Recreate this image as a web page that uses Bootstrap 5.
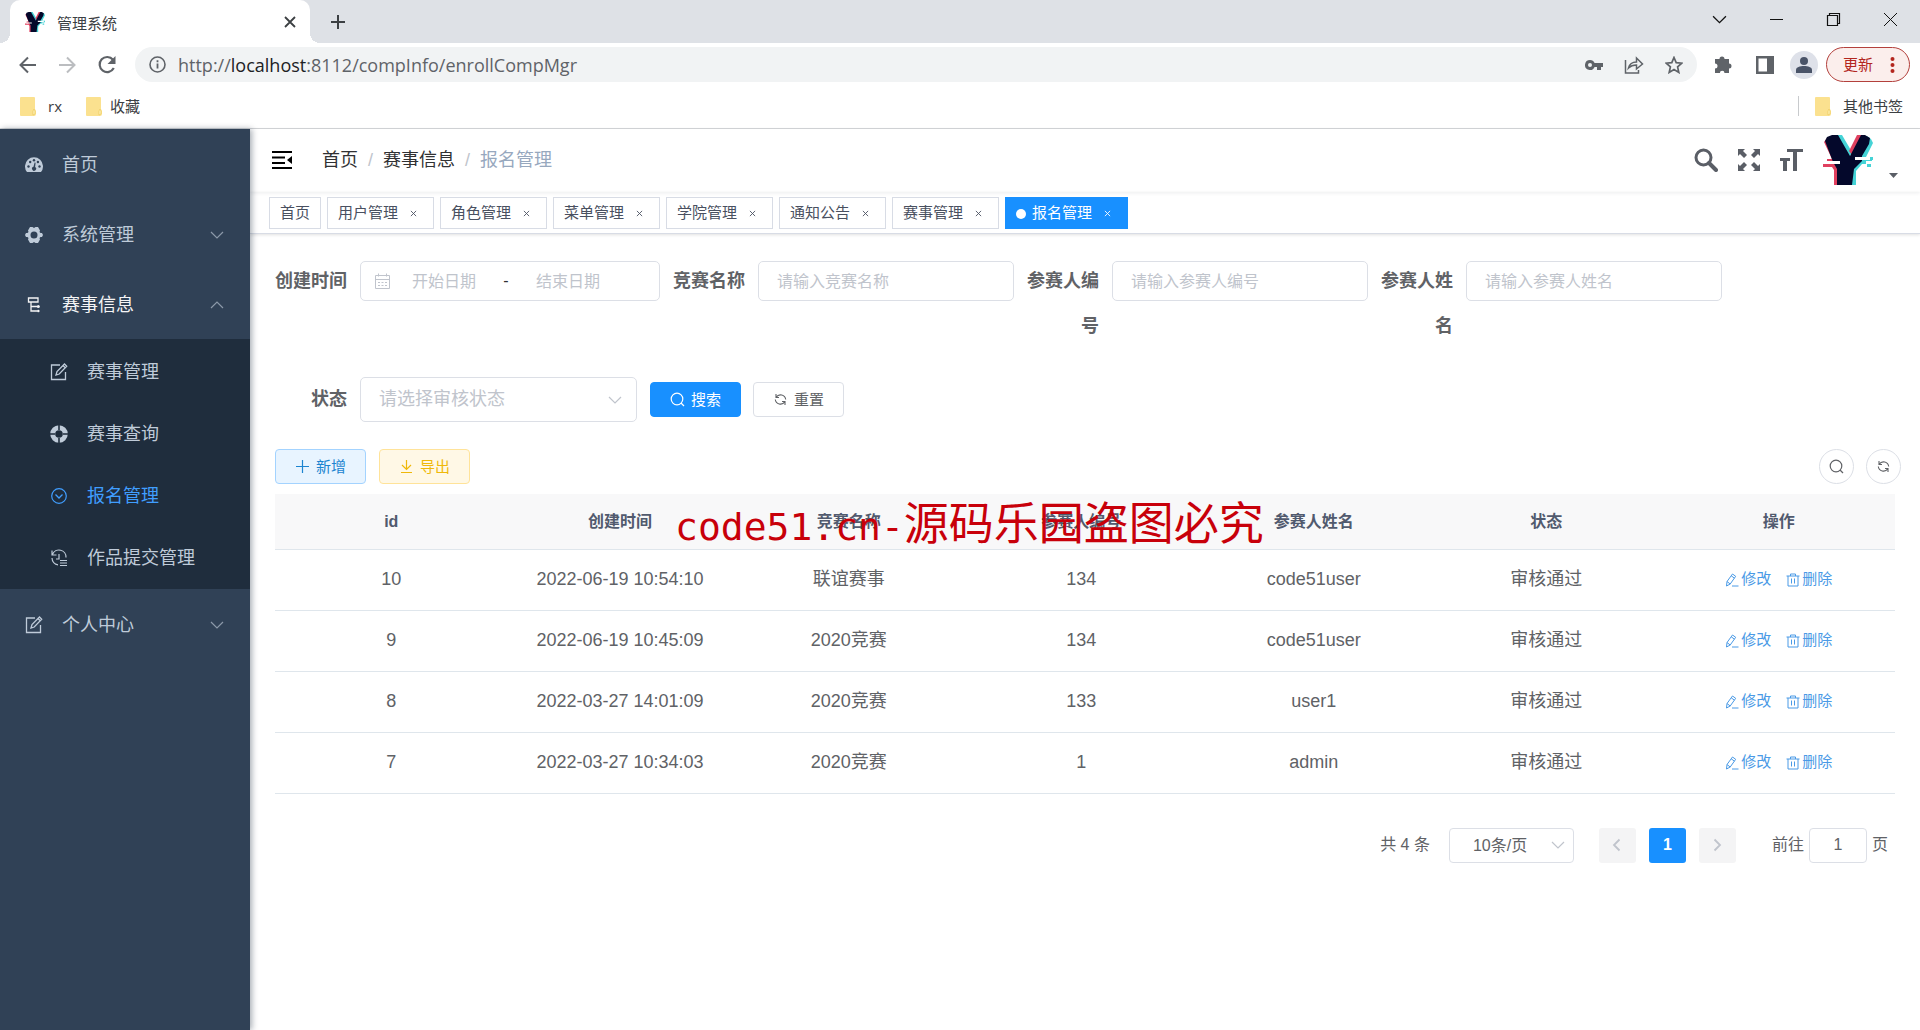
<!DOCTYPE html>
<html lang="zh-CN">
<head>
<meta charset="utf-8">
<meta name="viewport" content="width=device-width, initial-scale=1">
<title>管理系统</title>
<link href="https://cdn.jsdelivr.net/npm/bootstrap@5.3.0/dist/css/bootstrap.min.css" rel="stylesheet">
<style>
  :root { --ui: "Liberation Sans", "Noto Sans CJK SC", sans-serif; --blue: #1890ff; }
  body { font-family: var(--ui); font-size: 16px; color: #606266; background: #fff; }
  button, input, select { font-family: inherit; }
  svg { flex: none; display: block; }
  a { text-decoration: none; color: inherit; }
  .plain { border: 0; background: none; padding: 0; color: inherit; }

  /* browser frame */
  .chrome-ui { font-family: "Open Sans", "Noto Sans CJK SC", sans-serif; color: #3c4043; border-bottom: 1px solid #d3d5d8; }
  .tabstrip { background: #dee1e6; height: 43px; padding-left: 10px; padding-right: 22px; }
  .page-tab { background: #fff; width: 300px; height: 43px; border-radius: 10px 10px 0 0; padding: 0 13px 0 15px; font-size: 15px; position: relative; }
  .page-tab::before, .page-tab::after { content: ""; position: absolute; bottom: 0; width: 10px; height: 10px; }
  .page-tab::before { left: -10px; background: radial-gradient(circle at 0 0, #dee1e6 10px, #fff 10px); }
  .page-tab::after { right: -10px; background: radial-gradient(circle at 100% 0, #dee1e6 10px, #fff 10px); }
  .win-controls { gap: 42px; color: #111; }
  .toolbar { height: 45px; padding: 0 10px 2px 18px; color: #5f6368; }
  .omnibox { background: #f1f3f4; border-radius: 18px; height: 35px; padding: 0 14px 0 14px; margin-left: 18px; }
  .omni-tools { gap: 21px; }
  .url { font-size: 18px; line-height: 24px; color: #5f6368; }
  .url b { font-weight: 400; color: #202124; }
  .who { width: 28px; height: 28px; border-radius: 50%; background: #dee1e9; color: #4a5468; }
  .update-btn { height: 35px; width: 84px; border: 1px solid #b3403c; border-radius: 18px; background: #fbeeec; color: #b3261e; font-size: 15px; padding: 0 14px 0 16px; }
  .bookmarks { height: 40px; padding: 0 17px 4px 20px; font-size: 15px; }
  .bm-sep { width: 1px; height: 20px; background: #c8cacd; }

  /* sidebar */
  .side { width: 250px; flex: none; background: #304156; color: #bfcbd9; font-size: 18px; box-shadow: 2px 0 6px rgba(0, 21, 41, .35); z-index: 2; }
  .side a { display: flex; align-items: center; gap: 19px; height: 70px; padding: 2px 26px 0 25px; }
  .side a .arrow { margin-left: auto; color: #8c99a9; }
  .side .opened { color: #f4f4f5; }
  .side .sub { background: #1f2d3d; padding: 1px 0; }
  .side .sub a { height: 62px; padding-left: 50px; }
  .side .sub .current { color: #409eff; }

  /* top bars */
  .topbar { height: 63px; padding: 0 22px 2px 22px; box-shadow: 0 1px 4px rgba(0, 21, 41, .08); color: #5a5e66; }
  .crumbs { font-size: 18px; --bs-breadcrumb-divider: "/"; --bs-breadcrumb-item-padding-x: 10px; --bs-breadcrumb-divider-color: #c0c4cc; color: #303133; margin-left: 30px; padding-top: 2px; }
  .crumbs .active { color: #97a8be; }
  .views { padding: 5px 19px 4px; gap: 6px; border-bottom: 1px solid #d8dce5; box-shadow: 0 1px 3px rgba(0, 0, 0, .12); }
  .view-tag { height: 32px; border: 1px solid #d8dce5; color: #495060; font-size: 15px; padding: 1px 10px 0; display: flex; align-items: center; white-space: nowrap; }
  .view-tag .plain { width: 20px; margin-left: 5px; display: flex; justify-content: center; }
  .view-tag.on { background: var(--blue); border-color: var(--blue); color: #fff; }
  .view-tag.on::before { content: ""; width: 10px; height: 10px; border-radius: 50%; background: #fff; margin-right: 6px; }

  /* search form */
  .content { padding: 25px 25px 40px; }
  .search { gap: 28px 13px; }
  .lbl { width: 85px; padding-right: 13px; text-align: right; font-weight: 700; font-size: 18px; line-height: 45px; flex: none; }
  .box { border: 1px solid #dcdfe6; border-radius: 5px; height: 40px; background-color: #fff; }
  .search .box { margin-top: 2px; }
  .txt { width: 256px; padding: 2px 18px 0; font-size: 16px; }
  .txt::placeholder, .range input::placeholder { color: #c0c4cc; opacity: 1; }
  .range { width: 300px; padding: 0 13px; }
  .range input { width: 106px; border: 0; text-align: center; font-size: 16px; padding: 2px 0 0; background: none; }
  .range span { width: 18px; text-align: center; color: #303133; }
  .pick { --bs-form-select-bg-img: url("data:image/svg+xml,%3Csvg xmlns='http://www.w3.org/2000/svg' viewBox='0 0 14 14'%3E%3Cpath d='M1 4l6 6 6-6' fill='none' stroke='%23c0c4cc' stroke-width='1.2'/%3E%3C/svg%3E"); background-size: 14px 14px; }
  .search .pick { width: 277px; height: 45px; margin: 0; padding: 0 36px 0 18px; font-size: 18px; line-height: 43px; color: #c0c4cc; background-position: right 14px center; }
  .act { height: 35px; padding: 0 19px; font-size: 15px; line-height: 1; border-radius: 4px; display: inline-flex; align-items: center; gap: 6px; }
  .act-main { --bs-btn-bg: #1890ff; --bs-btn-border-color: #1890ff; --bs-btn-color: #fff; }
  .act-line { --bs-btn-bg: #fff; --bs-btn-border-color: #dcdfe6; --bs-btn-color: #606266; }
  .act-add { --bs-btn-bg: #e8f4ff; --bs-btn-border-color: #a3d3ff; --bs-btn-color: #1c84d0; }
  .act-out { --bs-btn-bg: #fff8e6; --bs-btn-border-color: #ffe399; --bs-btn-color: #efb80a; }
  .round-btn { width: 35px; height: 35px; border: 1px solid #dcdfe6; background: #fff; color: #606266; display: flex; align-items: center; justify-content: center; }
  .tools { margin-top: 27px; gap: 13px; }
  .tools-right { gap: 12px; margin-right: -6px; }

  /* data table */
  .grid-wrap { margin-top: 10px; position: relative; }
  .grid-table { table-layout: fixed; width: 100%; margin: 0; text-align: center; font-size: 18px; }
  .grid-table th { background: #f8f8f9; color: #515a6e; font-size: 16px; height: 55px; padding: 1px 0 0; border-bottom: 1px solid #dfe6ec; vertical-align: middle; }
  .grid-table td { height: 61px; padding: 0; color: #606266; border-bottom: 1px solid #dfe6ec; vertical-align: middle; }
  .grid-table .col-time { width: 225px; }
  .ops { display: flex; justify-content: center; gap: 15px; font-size: 15px; color: #4a9ae6; }
  .ops a { display: flex; align-items: center; gap: 2px; }
  .watermark { position: absolute; left: 400px; top: 0; font-family: "DejaVu Sans Mono", "Noto Sans CJK SC", monospace; font-size: 38px; line-height: 66px; color: #c8000a; white-space: nowrap; pointer-events: none; }
  .watermark span { font-family: "Noto Sans CJK SC", sans-serif; font-size: 45px; line-height: 1; }

  /* pager */
  .pager { margin-top: 34px; padding-right: 7px; font-size: 16px; }
  .pager .box { height: 35px; border-radius: 4px; }
  .pager .pick { width: 125px; padding: 0 40px 0 23px; font-size: 16px; line-height: 33px; color: #606266; background-position: right 8px center; margin-left: 19px; }
  .pg { width: 37px; height: 35px; border: 0; border-radius: 3px; background: #f4f4f5; color: #c0c4cc; display: flex; align-items: center; justify-content: center; font-size: 16px; }
  .pg.on { background: var(--blue); color: #fff; font-weight: 700; }
  .pages { gap: 13px; margin: 0 36px 0 25px; }
  .jump { width: 58px; text-align: center; margin: 0 5px; padding: 0; color: #606266; }
</style>
</head>
<body class="d-flex flex-column min-vh-100">

<svg width="0" height="0" class="position-absolute" aria-hidden="true">
  <defs>
    <symbol id="y" viewBox="0 0 50 50">
      <path fill="#e0405f" d="M1 7 4 3 16 26v24h-5V35L9 32H0v-3h7v-2H4v-3h5z"/>
      <path fill="#45d3d6" d="M14 0h5l10 17-3 6zM44 1l4 3 2 4-7 14h6v4h-6v3h-4l-6 7v14h-6V33l9-10z"/>
      <path fill="#e0405f" d="M34 0h5L29 20l-3-4z"/>
      <path fill="#04082b" d="M2 6 4 2 9 0h6l12 21L38 0h4l5 3-1 6-7 12v5l-8 8-2 16H14V34l-4-7z"/>
      <path fill="#fff" d="M4 26h13v3H4zM32 22h15v3H32z"/>
      <path fill="#45d3d6" d="M44 29h4v3h-4zM48 22h2v3h-2z"/>
    </symbol>
    <symbol id="down" viewBox="0 0 14 14"><path d="M1 4l6 6 6-6" fill="none" stroke="currentColor" stroke-width="1.2"/></symbol>
    <symbol id="folder" viewBox="0 0 16 19"><path d="M1 0h13a1 1 0 0 1 1 1v11l1 2v3a2 2 0 0 1-2 2H1a1 1 0 0 1-1-1V1a1 1 0 0 1 1-1z" fill="#fbe18f"/><path d="M13 18v-4l1-2 1 2v3z" fill="#fff3bd" stroke="#edca5c" stroke-width=".7"/></symbol>
    <symbol id="edit" viewBox="0 0 18 18"><path d="M10 2H1.500v14.500h14V9M6 12l1-3.500L14.500 1l2.200 2.200L9.200 11zM13 2.500l2.200 2.200" fill="none" stroke="currentColor" stroke-width="1.300"/></symbol>
    <symbol id="cross" viewBox="0 0 8 8"><path d="M1 1l6 6M7 1L1 7" stroke="currentColor" stroke-width="1"/></symbol>
    <symbol id="find" viewBox="0 0 15 15"><circle cx="7" cy="7" r="5.800" fill="none" stroke="currentColor" stroke-width="1.200"/><path d="M11 11l3 3" stroke="currentColor" stroke-width="1.200"/></symbol>
    <symbol id="refresh" viewBox="0 0 15 15"><path d="M3 2v3.500h3M3.200 5.200A5.200 5.200 0 0 1 12.700 7.500M12 13V9.500H9M11.800 9.800A5.200 5.200 0 0 1 2.300 7.500" fill="none" stroke="currentColor" stroke-width="1.100"/></symbol>
    <symbol id="pen" viewBox="0 0 14 14"><path d="M2 8.500 7.500 1l3.200 2.300L5.200 11 1.500 13zM6.200 2.800l3.200 2.300M2 8.500 5.200 11M7 13h6.500" fill="none" stroke="currentColor"/></symbol>
    <symbol id="bin" viewBox="0 0 14 14"><path d="M.5 3h13M4.500 3V1h5v2M2 3v10h10V3M5.500 5.500v5M8.500 5.500v5" fill="none" stroke="currentColor"/></symbol>
  </defs>
</svg>

<header class="chrome-ui">
  <div class="tabstrip d-flex align-items-center">
    <div class="page-tab d-flex align-items-center">
      <svg width="20" height="20" class="me-2"><use href="#y"/></svg>
      <span class="ps-1 pt-1">管理系统</span>
      <button class="plain ms-auto" aria-label="关闭标签页"><svg width="14" height="14" viewBox="0 0 14 14"><path d="M2 2l10 10M12 2L2 12" stroke="#3c4043" stroke-width="1.800"/></svg></button>
    </div>
    <button class="plain ms-3 ps-1" aria-label="新标签页"><svg width="16" height="16" viewBox="0 0 16 16"><path d="M8 1v14M1 8h14" stroke="#3c4043" stroke-width="2"/></svg></button>
    <div class="win-controls d-flex align-items-center ms-auto pb-1">
      <button class="plain" aria-label="搜索标签页"><svg width="15" height="15"><use href="#down"/></svg></button>
      <button class="plain" aria-label="最小化"><svg width="15" height="15" viewBox="0 0 15 15"><path d="M1 7.500h13" stroke="currentColor"/></svg></button>
      <button class="plain" aria-label="还原"><svg width="15" height="15" viewBox="0 0 15 15"><path d="M1.500 3.500h10v10h-10zM3.500 3.500v-2h10v10h-2" fill="none" stroke="currentColor" stroke-width="1.200"/></svg></button>
      <button class="plain" aria-label="关闭"><svg width="15" height="15" viewBox="0 0 15 15"><path d="M1 1l13 13M14 1L1 14" stroke="currentColor"/></svg></button>
    </div>
  </div>

  <div class="toolbar d-flex align-items-center">
    <button class="plain" aria-label="后退"><svg width="19" height="18" viewBox="0 0 19 18"><path d="M18 9H3M10 1.500 2.500 9l7.500 7.500" fill="none" stroke="currentColor" stroke-width="2"/></svg></button>
    <button class="plain" aria-label="前进" disabled><svg width="60" height="18" viewBox="-21 0 60 18"><path d="M1 9h15M9 1.500 16.500 9 9 16.500" fill="none" stroke="#bbbdc0" stroke-width="2"/></svg></button>
    <button class="plain" aria-label="重新加载"><svg width="20" height="20" viewBox="0 0 20 20"><path d="M16.800 13A7.500 7.500 0 1 1 16 4.800" fill="none" stroke="currentColor" stroke-width="2.200"/><path d="M18.500 1v8h-8z" fill="currentColor"/></svg></button>
    <div class="omnibox d-flex align-items-center flex-fill">
      <svg width="17" height="17" viewBox="0 0 17 17"><circle cx="8.500" cy="8.500" r="7.500" fill="none" stroke="currentColor" stroke-width="1.600"/><path d="M8.500 7.500v5M8.500 4.200v2" stroke="currentColor" stroke-width="1.800"/></svg>
      <span class="url ms-2 ps-1">http://<b>localhost</b>:8112/compInfo/enrollCompMgr</span>
      <div class="omni-tools d-flex align-items-center ms-auto">
        <svg width="18" height="14" viewBox="0 0 18 14"><path d="M5 2a5 5 0 1 0 4.600 7H12v3h4V9h2V5H9.600A5 5 0 0 0 5 2zm0 3a2 2 0 1 1 0 4 2 2 0 0 1 0-4z" fill="currentColor" fill-rule="evenodd"/></svg>
        <svg width="20" height="18" viewBox="0 0 19 18"><path d="M1 4v13h13v-3M4 12c1-4 4-6 8-6V2l6 6-6 5V9c-3 0-6 1-8 3z" fill="none" stroke="currentColor" stroke-width="1.500"/></svg>
        <svg width="18" height="18" viewBox="0 0 18 18"><path d="M9 1.500l2.200 5.200 5.600.5-4.200 3.700 1.200 5.500L9 13.500l-4.800 2.900 1.200-5.500L1.200 7.200l5.600-.5z" fill="none" stroke="currentColor" stroke-width="1.700"/></svg>
      </div>
    </div>
    <svg class="ms-3" width="19" height="19" viewBox="0 0 19 19"><path d="M2 4h4.500a2.500 2.500 0 1 1 5 0H16v4.500a2.500 2.500 0 1 1 0 5V18h-4.500a2.300 2.300 0 1 0-4.600 0H2v-4.500a2.500 2.500 0 0 0 0-5z" fill="currentColor"/></svg>
    <svg class="ms-4" width="18" height="18" viewBox="0 0 18 18"><path d="M0 0h18v18H0zM2.500 2.500v13H11v-13z" fill="currentColor" fill-rule="evenodd"/></svg>
    <span class="who d-flex align-items-center justify-content-center ms-3"><svg width="18" height="18" viewBox="0 0 18 18"><circle cx="9" cy="5" r="4" fill="currentColor"/><path d="M1 17v-3c0-3 4-4 8-4s8 1 8 4v3z" fill="currentColor"/></svg></span>
    <button class="update-btn d-flex align-items-center justify-content-between ms-2"><span>更新</span><svg width="5" height="18" viewBox="0 0 5 18"><g fill="currentColor"><circle cx="2.500" cy="3" r="2"/><circle cx="2.500" cy="9" r="2"/><circle cx="2.500" cy="15" r="2"/></g></svg></button>
  </div>

  <nav class="bookmarks d-flex align-items-center" aria-label="书签">
    <a href="#" class="d-flex align-items-center"><svg width="16" height="19" class="me-2"><use href="#folder"/></svg><span class="ms-1">rx</span></a>
    <a href="#" class="d-flex align-items-center ms-4"><svg width="16" height="19" class="me-2"><use href="#folder"/></svg><span>收藏</span></a>
    <span class="bm-sep ms-auto me-3"></span>
    <a href="#" class="d-flex align-items-center"><svg width="16" height="19" class="me-2"><use href="#folder"/></svg><span class="ms-1">其他书签</span></a>
  </nav>
</header>

<div class="d-flex flex-fill">
  <nav class="side" aria-label="主菜单">
    <a href="#"><svg width="18" height="18" viewBox="0 0 18 18"><path d="M2 16a9 9 0 1 1 14 0z" fill="currentColor"/><g fill="#304156"><circle cx="3.500" cy="10.500" r="1.200"/><circle cx="5.200" cy="6" r="1.200"/><circle cx="9" cy="4.200" r="1.200"/><circle cx="14.500" cy="10.500" r="1.200"/><circle cx="12.900" cy="6" r="1.200"/><path d="M9.600 6.500l1 .2-.5 4.300a2 2 0 1 1-1.600-.2z"/></g></svg>首页</a>
    <a href="#"><svg width="18" height="18" viewBox="0 0 18 18"><path d="M5 1h2.500L9 2l1.500-1H13l2 3.500-.5 1.500 1 1H17l1 2-1 2h-1.500l-1 1 .5 1.500-2 3.500h-2.500L9 16l-1.500 1H5l-2-3.500.5-1.500-1-1H1L0 9l1-2h1.500l1-1L3 4.500zM9 5.500a3.500 3.500 0 1 0 0 7 3.500 3.500 0 0 0 0-7z" fill="currentColor" fill-rule="evenodd"/></svg>系统管理<svg class="arrow" width="14" height="14"><use href="#down"/></svg></a>
    <a href="#" class="opened"><svg width="18" height="18" viewBox="0 0 18 18"><path d="M3.500 2h9.500v4H3.500zM6 6v9h6M6 10.500h6" fill="none" stroke="currentColor" stroke-width="1.300"/><circle cx="13.300" cy="10.500" r="1.500" fill="currentColor"/><circle cx="13.300" cy="15" r="1.300" fill="currentColor"/></svg>赛事信息<svg class="arrow" width="14" height="14" viewBox="0 0 14 14"><path d="M1 10l6-6 6 6" fill="none" stroke="currentColor" stroke-width="1.200"/></svg></a>
    <div class="sub">
      <a href="#"><svg width="18" height="18"><use href="#edit"/></svg>赛事管理</a>
      <a href="#"><svg width="18" height="18" viewBox="0 0 18 18"><circle cx="9" cy="9" r="6.300" fill="none" stroke="currentColor" stroke-width="5"/><path d="M9 0v5M9 13v5M0 9h5M13 9h5" stroke="#1f2d3d" stroke-width="1.600"/></svg>赛事查询</a>
      <a href="#" class="current"><svg width="18" height="18" viewBox="0 0 18 18"><circle cx="9" cy="9" r="7.300" fill="none" stroke="currentColor" stroke-width="1.200"/><path d="M5.500 7.500 9 11l3.500-3.500" fill="none" stroke="currentColor" stroke-width="1.300"/></svg>报名管理</a>
      <a href="#"><svg width="18" height="18" viewBox="0 0 18 18"><path d="M2 1.500V6h4.500M2.500 5.500A7 7 0 0 1 16 8.500M2 9a7 7 0 0 0 6 6.800M9 5v5h-3M10 11.500h7M10 14h7M10 16.500h7" fill="none" stroke="currentColor" stroke-width="1.200"/></svg>作品提交管理</a>
    </div>
    <a href="#"><svg width="18" height="18"><use href="#edit"/></svg>个人中心<svg class="arrow" width="14" height="14"><use href="#down"/></svg></a>
  </nav>

  <div class="flex-fill">
    <div class="topbar d-flex align-items-center">
      <button class="plain text-black" aria-label="收起菜单"><svg width="20" height="20" viewBox="0 0 20 20"><path d="M0 2h20M0 7.500h13M0 13h13M0 18h20" stroke="currentColor" stroke-width="2"/><path d="M20 6v8l-5-4z" fill="currentColor"/></svg></button>
      <ol class="breadcrumb crumbs mb-0">
        <li class="breadcrumb-item"><a href="#">首页</a></li>
        <li class="breadcrumb-item"><a href="#">赛事信息</a></li>
        <li class="breadcrumb-item active">报名管理</li>
      </ol>
      <div class="d-flex align-items-center ms-auto">
        <button class="plain me-3" aria-label="搜索"><svg width="24" height="24" viewBox="0 0 24 24"><circle cx="9.500" cy="9.500" r="7.500" fill="none" stroke="currentColor" stroke-width="3"/><path d="M15 15l7 7" stroke="currentColor" stroke-width="4" stroke-linecap="round"/></svg></button>
        <button class="plain ms-1 me-3" aria-label="全屏"><svg width="22" height="22" viewBox="0 0 22 22"><path d="M0 0h7L5 2l4 4-3 3-4-4-2 2zM22 0v7l-2-2-4 4-3-3 4-4-2-2zM0 22v-7l2 2 4-4 3 3-4 4 2 2zM22 22h-7l2-2-4-4 3-3 4 4 2-2z" fill="currentColor"/></svg></button>
        <button class="plain ms-1 me-3" aria-label="字体大小"><svg width="23" height="22" viewBox="0 0 23 22"><path d="M7 0h16v3h-6v19h-4V3H7zM0 9h10v3H7v10H3V12H0z" fill="currentColor"/></svg></button>
        <button class="plain ms-1 d-flex align-items-end" aria-label="用户菜单"><svg width="50" height="50"><use href="#y"/></svg><svg width="9" height="14" viewBox="0 0 9 14" class="ms-3"><path d="M0 2h9L4.500 7z" fill="currentColor"/></svg></button>
      </div>
    </div>

    <div class="views d-flex">
      <a href="#" class="view-tag">首页</a>
      <span class="view-tag"><a href="#">用户管理</a><button class="plain" aria-label="关闭"><svg width="7" height="7"><use href="#cross"/></svg></button></span>
      <span class="view-tag"><a href="#">角色管理</a><button class="plain" aria-label="关闭"><svg width="7" height="7"><use href="#cross"/></svg></button></span>
      <span class="view-tag"><a href="#">菜单管理</a><button class="plain" aria-label="关闭"><svg width="7" height="7"><use href="#cross"/></svg></button></span>
      <span class="view-tag"><a href="#">学院管理</a><button class="plain" aria-label="关闭"><svg width="7" height="7"><use href="#cross"/></svg></button></span>
      <span class="view-tag"><a href="#">通知公告</a><button class="plain" aria-label="关闭"><svg width="7" height="7"><use href="#cross"/></svg></button></span>
      <span class="view-tag"><a href="#">赛事管理</a><button class="plain" aria-label="关闭"><svg width="7" height="7"><use href="#cross"/></svg></button></span>
      <span class="view-tag on"><a href="#">报名管理</a><button class="plain" aria-label="关闭"><svg width="7" height="7"><use href="#cross"/></svg></button></span>
    </div>

    <main class="content">
      <form class="search d-flex flex-wrap">
        <div class="d-flex">
          <label class="lbl" for="d1">创建时间</label>
          <div class="box range d-flex align-items-center">
            <svg width="17" height="17" viewBox="0 0 17 17"><path d="M1.500 2.500h14v13h-14zM1.500 6.500h14M4.500.5v3M12.500.5v3M4 9.500h2M7.500 9.500h2M11 9.500h2M4 12.500h2M7.500 12.500h2M11 12.500h2" fill="none" stroke="#c0c4cc"/></svg>
            <input id="d1" type="text" placeholder="开始日期"><span>-</span><input type="text" placeholder="结束日期" aria-label="结束日期">
          </div>
        </div>
        <div class="d-flex"><label class="lbl" for="n1">竞赛名称</label><input id="n1" class="box txt" type="text" placeholder="请输入竞赛名称"></div>
        <div class="d-flex"><label class="lbl" for="n2">参赛人编号</label><input id="n2" class="box txt" type="text" placeholder="请输入参赛人编号"></div>
        <div class="d-flex"><label class="lbl" for="n3">参赛人姓名</label><input id="n3" class="box txt" type="text" placeholder="请输入参赛人姓名"></div>
        <div class="d-flex"><label class="lbl" for="s1">状态</label><select id="s1" class="form-select box pick"><option>请选择审核状态</option><option>审核通过</option></select></div>
        <div class="d-flex align-items-center gap-2">
          <button type="button" class="btn act act-main"><svg width="15" height="15"><use href="#find"/></svg>搜索</button>
          <button type="button" class="btn act act-line ms-1"><svg width="15" height="15"><use href="#refresh"/></svg>重置</button>
        </div>
      </form>

      <div class="tools d-flex align-items-center">
        <button class="btn act act-add"><svg width="15" height="15" viewBox="0 0 15 15"><path d="M7.500 1v13M1 7.500h13" stroke="currentColor" stroke-width="1.200"/></svg>新增</button>
        <button class="btn act act-out"><svg width="15" height="15" viewBox="0 0 15 15"><path d="M7.500 1v9M3 6l4.500 4.500L12 6M2 13.500h11" fill="none" stroke="currentColor" stroke-width="1.200"/></svg>导出</button>
        <div class="tools-right d-flex ms-auto">
          <button class="round-btn rounded-circle p-0" aria-label="显示搜索"><svg width="15" height="15"><use href="#find"/></svg></button>
          <button class="round-btn rounded-circle p-0" aria-label="刷新"><svg width="15" height="15"><use href="#refresh"/></svg></button>
        </div>
      </div>

      <div class="grid-wrap">
        <table class="table grid-table">
          <thead><tr><th>id</th><th class="col-time">创建时间</th><th>竞赛名称</th><th>参赛人编号</th><th>参赛人姓名</th><th>状态</th><th>操作</th></tr></thead>
          <tbody>
            <tr><td>10</td><td>2022-06-19 10:54:10</td><td>联谊赛事</td><td>134</td><td>code51user</td><td>审核通过</td><td><div class="ops"><a href="#"><svg width="14" height="14"><use href="#pen"/></svg>修改</a><a href="#"><svg width="14" height="14"><use href="#bin"/></svg>删除</a></div></td></tr>
            <tr><td>9</td><td>2022-06-19 10:45:09</td><td>2020竞赛</td><td>134</td><td>code51user</td><td>审核通过</td><td><div class="ops"><a href="#"><svg width="14" height="14"><use href="#pen"/></svg>修改</a><a href="#"><svg width="14" height="14"><use href="#bin"/></svg>删除</a></div></td></tr>
            <tr><td>8</td><td>2022-03-27 14:01:09</td><td>2020竞赛</td><td>133</td><td>user1</td><td>审核通过</td><td><div class="ops"><a href="#"><svg width="14" height="14"><use href="#pen"/></svg>修改</a><a href="#"><svg width="14" height="14"><use href="#bin"/></svg>删除</a></div></td></tr>
            <tr><td>7</td><td>2022-03-27 10:34:03</td><td>2020竞赛</td><td>1</td><td>admin</td><td>审核通过</td><td><div class="ops"><a href="#"><svg width="14" height="14"><use href="#pen"/></svg>修改</a><a href="#"><svg width="14" height="14"><use href="#bin"/></svg>删除</a></div></td></tr>
          </tbody>
        </table>
        <div class="watermark">code51.cn-<span>源码乐园盗图必究</span></div>
      </div>

      <div class="pager d-flex align-items-center justify-content-end">
        <span>共 4 条</span>
        <select class="form-select box pick" aria-label="每页条数"><option>10条/页</option><option>20条/页</option></select>
        <div class="pages d-flex">
          <button class="pg" disabled aria-label="上一页"><svg width="14" height="14" viewBox="0 0 14 14"><path d="M9.500 1.500 4 7l5.500 5.500" fill="none" stroke="currentColor" stroke-width="1.800"/></svg></button>
          <button class="pg on">1</button>
          <button class="pg" disabled aria-label="下一页"><svg width="14" height="14" viewBox="0 0 14 14"><path d="M4.500 1.500 10 7l-5.500 5.500" fill="none" stroke="currentColor" stroke-width="1.800"/></svg></button>
        </div>
        <label for="jump">前往</label><input id="jump" class="box jump" type="text" value="1"><span>页</span>
      </div>
    </main>
  </div>
</div>

<script src="https://cdn.jsdelivr.net/npm/bootstrap@5.3.0/dist/js/bootstrap.bundle.min.js"></script>
</body>
</html>
